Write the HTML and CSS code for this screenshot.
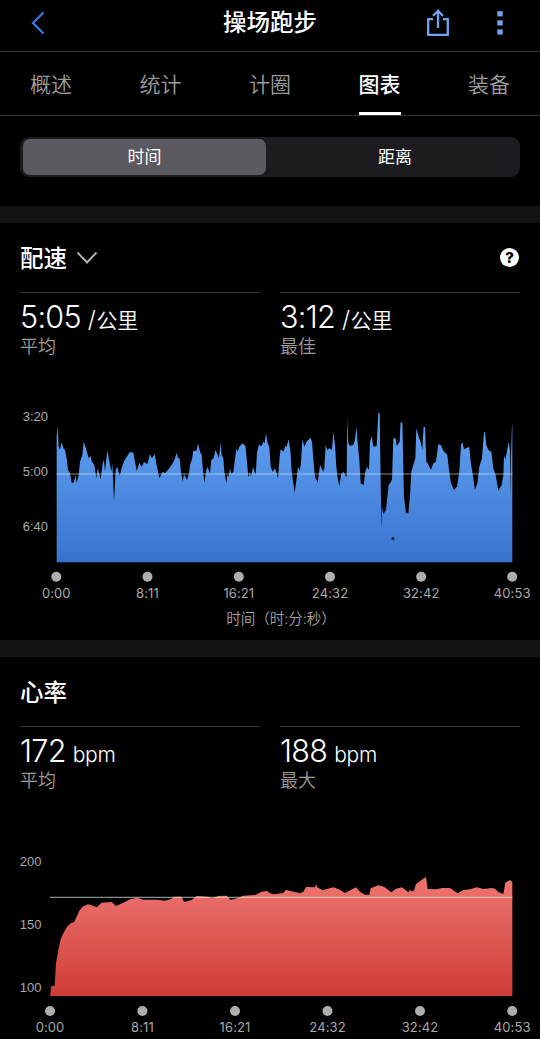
FILE: index.html
```
<!DOCTYPE html>
<html lang="zh-CN">

<head>
    <meta charset="UTF-8">
    <meta name="viewport" content="width=device-width, initial-scale=1">
    <title>操场跑步</title>
    <link rel="stylesheet" href="styles.css">
</head>

<body>
    <header class="topbar">
        <svg class="back" viewBox="0 0 14 24" fill="none" stroke="currentColor" stroke-width="2.2">
            <path d="M12.500 1.500 2 12l10.500 10.500"></path>
        </svg>
        <h1 class="title">操场跑步</h1>
        <div class="actions">
            <svg class="share" viewBox="0 0 24 28" fill="none" stroke="currentColor" stroke-width="2.300">
                <path d="M7 10.200H2.200v15.600h19.600V10.200H17M12 19V2M7 6.800l5-5 5 5"></path>
            </svg>
            <svg class="more" viewBox="0 0 6 24" fill="currentColor">
                <rect x="0.300" y="0.200" width="5.400" height="5.200"></rect>
                <rect x="0.300" y="9.300" width="5.400" height="5.200"></rect>
                <rect x="0.300" y="18.400" width="5.400" height="5.200"></rect>
            </svg>
        </div>
    </header>

    <nav class="tabs">
        <a class="tab">概述</a>
        <a class="tab">统计</a>
        <a class="tab">计圈</a>
        <a class="tab active">图表</a>
        <a class="tab">装备</a>
    </nav>

    <div class="switch-row">
        <div class="switch">
            <div class="option selected">时间</div>
            <div class="option">距离</div>
        </div>
    </div>

    <main>
        <section class="card">
            <div class="card-head">
                <h2>配速</h2>
                <svg class="chevron" viewBox="0 0 22 14" fill="none" stroke="currentColor" stroke-width="2">
                    <path d="M1.500 1.500 11 11.500l9.500-10"></path>
                </svg>
                <span class="help">?</span>
            </div>
            <div class="stats">
                <div class="stat">
                    <div class="value">5:05<span class="unit"><span class="slash">/</span>公里</span></div>
                    <div class="label">平均</div>
                </div>
                <div class="stat">
                    <div class="value">3:12<span class="unit"><span class="slash">/</span>公里</span></div>
                    <div class="label">最佳</div>
                </div>
            </div>
            <svg class="chart pace" width="540" height="204" viewBox="0 0 540 204">
                <defs>
                    <linearGradient id="blue" gradientUnits="userSpaceOnUse" x1="0" y1="36" x2="0" y2="487">
                        <stop offset="0" stop-color="#62a3f3"></stop>
                        <stop offset="0.400" stop-color="#5291e6"></stop>
                        <stop offset="1" stop-color="#3874cf"></stop>
                    </linearGradient>
                </defs>
                <path fill="url(#blue)" transform="scale(0.33333)" d="M170 487V110L173 78 176 140 180 150 185 126 190 145 195 150 200 175 204 210 210 220 215 248 221 248 227 225 230 248 236 225 240 185 247 165 251 125 258 145 266 175 271 168 276 185 283 195 289 235 293 205 302 238 308 190 312 180 315 215 322 150 330 195 334 215 337 190 342 305 347 210 352 200 359 228 366 200 374 180 380 170 390 156 400 158 405 185 410 213 418 188 425 200 432 186 442 192 450 163 456 175 464 163 470 195 478 235 488 215 495 220 508 205 518 190 524 178 530 158 534 175 539 175 543 215 548 245 552 222 561 240 567 220 570 195 576 178 580 152 590 152 594 130 600 155 605 165 608 200 613 248 618 215 622 200 630 220 634 180 641 175 646 150 651 160 657 175 662 127 665 165 670 175 673 215 679 250 682 225 686 230 690 205 694 222 700 215 706 170 709 145 713 155 718 140 728 130 736 138 740 175 745 232 750 215 753 230 759 200 767 225 771 160 776 135 785 138 790 125 794 130 798 100 803 130 808 140 812 200 818 215 825 205 830 220 834 235 839 170 842 148 850 155 856 138 860 140 866 118 871 150 875 215 880 250 884 278 890 235 894 200 899 212 903 190 907 118 913 140 920 125 931 113 936 125 941 190 945 230 953 248 960 195 970 215 973 205 977 135 982 150 988 145 996 150 1000 95 1005 135 1009 200 1013 235 1018 258 1023 225 1030 215 1040 232 1042 55 1045 130 1050 138 1060 135 1065 120 1069 80 1074 140 1078 180 1082 250 1091 255 1096 215 1101 200 1107 210 1110 125 1115 108 1120 140 1130 138 1135 38 1139 40 1141 180 1143 300 1144 385 1146 320 1150 342 1158 330 1166 255 1176 240 1180 115 1187 115 1190 138 1199 125 1202 65 1207 70 1210 200 1212 290 1218 340 1225 340 1230 290 1234 215 1246 175 1249 85 1256 110 1263 130 1267 150 1271 80 1275 82 1279 185 1283 190 1293 210 1300 190 1308 185 1315 133 1322 135 1330 152 1342 165 1347 210 1353 250 1362 270 1371 260 1378 215 1383 135 1387 125 1392 148 1408 140 1412 185 1420 235 1425 270 1432 250 1438 200 1446 175 1452 97 1455 97 1459 135 1465 150 1474 155 1480 205 1487 225 1495 272 1505 255 1510 225 1512 165 1516 180 1526 125 1530 150 1532 290 1533 170 1536 75H1537V487Z"></path>
                <path class="average" d="M56.500 74H512.500"></path>
                <circle cx="393" cy="138.500" r="1.500" fill="#0b1a33"></circle>
                <g class="y-labels">
                    <text x="48" y="21">3:20</text>
                    <text x="48" y="76">5:00</text>
                    <text x="48" y="131">6:40</text>
                </g>
                <g class="dots">
                    <circle cx="56.300" cy="176.700" r="5"></circle>
                    <circle cx="147.500" cy="176.700" r="5"></circle>
                    <circle cx="238.800" cy="176.700" r="5"></circle>
                    <circle cx="330" cy="176.700" r="5"></circle>
                    <circle cx="421.200" cy="176.700" r="5"></circle>
                    <circle cx="512.200" cy="176.700" r="5"></circle>
                </g>
                <g class="x-labels">
                    <text x="56.300" y="198">0:00</text>
                    <text x="147.500" y="198">8:11</text>
                    <text x="238.800" y="198">16:21</text>
                    <text x="330" y="198">24:32</text>
                    <text x="421.200" y="198">32:42</text>
                    <text x="512.200" y="198">40:53</text>
                </g>
            </svg>
            <div class="axis-title">时间（时:分:秒）</div>
        </section>

        <section class="card">
            <div class="card-head">
                <h2>心率</h2>
            </div>
            <div class="stats">
                <div class="stat">
                    <div class="value">172<span class="unit">bpm</span></div>
                    <div class="label">平均</div>
                </div>
                <div class="stat">
                    <div class="value">188<span class="unit">bpm</span></div>
                    <div class="label">最大</div>
                </div>
            </div>
            <svg class="chart heart" width="540" height="189" viewBox="0 0 540 189">
                <defs>
                    <linearGradient id="red" gradientUnits="userSpaceOnUse" x1="0" y1="81" x2="0" y2="438">
                        <stop offset="0" stop-color="#ee736e"></stop>
                        <stop offset="0.250" stop-color="#e76863"></stop>
                        <stop offset="1" stop-color="#ce3d35"></stop>
                    </linearGradient>
                </defs>
                <path fill="url(#red)" transform="scale(0.33333)" d="M150 438 154 408 164 408 168 340 175 300 182 268 190 250 200 232 212 220 222 216 230 200 238 182 248 170 264 163 275 166 290 172 305 158 335 156 348 168 370 158 390 148 412 143 430 149 470 149 495 152 515 146 522 140 545 140 552 156 575 150 590 138 625 140 635 145 655 138 680 137 692 150 715 143 730 137 765 135 785 125 800 123 810 130 822 133 850 129 858 119 880 125 900 130 910 125 918 111 945 112 949 103 951 111 968 121 1000 112 1015 117 1035 129 1068 112 1080 125 1095 134 1108 134 1112 115 1135 106 1152 110 1174 127 1188 116 1206 112 1225 127 1230 119 1235 124 1242 122 1248 102 1265 90 1278 81 1283 117 1310 118 1325 114 1350 114 1373 130 1390 120 1410 118 1430 112 1450 117 1475 114 1485 116 1495 126 1510 132 1516 98 1530 90 1537 96V438Z"></path>
                <path class="average" d="M50 47.400H512.500"></path>
                <g class="y-labels">
                    <text x="41.500" y="16">200</text>
                    <text x="41.500" y="79">150</text>
                    <text x="41.500" y="142">100</text>
                </g>
                <g class="dots">
                    <circle cx="50" cy="161" r="5"></circle>
                    <circle cx="142.400" cy="161" r="5"></circle>
                    <circle cx="235" cy="161" r="5"></circle>
                    <circle cx="327.500" cy="161" r="5"></circle>
                    <circle cx="420" cy="161" r="5"></circle>
                    <circle cx="512.200" cy="161" r="5"></circle>
                </g>
                <g class="x-labels">
                    <text x="50" y="182">0:00</text>
                    <text x="142.400" y="182">8:11</text>
                    <text x="235" y="182">16:21</text>
                    <text x="327.500" y="182">24:32</text>
                    <text x="420" y="182">32:42</text>
                    <text x="512.200" y="182">40:53</text>
                </g>
            </svg>
        </section>
    </main>
</body>

</html>
```
FILE: styles.css
```
* {
    box-sizing: border-box;
}

body {
    margin: 0;
    width: 540px;
    height: 1039px;
    overflow: hidden;
    background-color: #000;
    color: #fff;
    font-family: Inter, 'Noto Sans CJK SC', sans-serif;
}

svg {
    display: block;
}

h1,
h2 {
    margin: 0;
    font-weight: 500;
}

.topbar {
    display: grid;
    grid-template-columns: 1fr auto 1fr;
    align-items: center;
    height: 52px;
    padding: 0 37px 6px 31px;
    border-bottom: 1px solid #363638;
}

.back {
    width: 14px;
    height: 24px;
    color: #3b7ce6;
}

.title {
    margin-left: 6px;
    padding-top: 1px;
    font-size: 23.5px;
    line-height: 44px;
}

.actions {
    display: flex;
    justify-content: flex-end;
    align-items: center;
    gap: 47px;
    color: #6ea5ee;
}

.share {
    width: 24px;
    height: 28px;
}

.more {
    width: 6px;
    height: 24px;
}

.tabs {
    display: flex;
    justify-content: space-between;
    height: 64px;
    padding: 0 30px;
    border-bottom: 1px solid #363638;
}

.tab {
    width: 42px;
    line-height: 65px;
    font-size: 21px;
    font-weight: 350;
    white-space: nowrap;
    color: #9c9c9c;
}

.tab.active {
    color: #fff;
    font-weight: 500;
    height: 63px;
    border-bottom: 3px solid #fff;
}

.switch-row {
    height: 90px;
    padding: 21px 20px 0;
}

.switch {
    display: flex;
    height: 40px;
    padding: 2px 3px;
    border-radius: 9px;
    background-color: #1c1b20;
}

.option {
    flex: 1;
    border-radius: 7px;
    font-size: 17px;
    line-height: 36px;
    text-align: center;
}

.option:last-child {
    padding-left: 7px;
}

.option.selected {
    flex: 0 0 243px;
    background-color: #5b5a60;
}

.card {
    height: 434px;
    border-top: 17px solid #121212;
}

.card-head {
    display: flex;
    align-items: center;
    height: 69px;
    padding: 0 21px 0 20px;
}

.card-head h2 {
    font-size: 23.5px;
    line-height: 68px;
    padding-top: 2px;
}

.chevron {
    width: 22px;
    height: 14px;
    margin-left: 9px;
    color: #b0b0b0;
}

.help {
    width: 19px;
    height: 19px;
    margin-left: auto;
    border-radius: 50%;
    background-color: #fff;
    color: #000;
    font-size: 15px;
    font-weight: 800;
    line-height: 19px;
    text-align: center;
}

.stats {
    display: grid;
    grid-template-columns: 1fr 1fr;
    gap: 20px;
    padding: 0 20px;
}

.stat {
    height: 80px;
    padding-top: 6px;
    border-top: 1px solid #363638;
}

.value {
    height: 37px;
    font-size: 30.5px;
    font-weight: 350;
    line-height: 36px;
    letter-spacing: -0.7px;
    white-space: nowrap;
}

.unit {
    margin-left: 7px;
    font-size: 21px;
    letter-spacing: -0.3px;
}

.slash {
    margin-right: 1px;
    font-size: 23px;
}

.label {
    font-size: 18px;
    font-weight: 350;
    line-height: 22px;
    color: #9c9c9c;
}

.pace {
    margin-top: 28px;
}

.heart {
    margin-top: 44px;
}

.average {
    fill: none;
    stroke: #d8ece8;
    stroke-opacity: 0.6;
    stroke-width: 1.2;
}

.y-labels,
.x-labels {
    fill: #a8a8a8;
    font-size: 13px;
}

.y-labels {
    font-family: 'Liberation Sans', sans-serif;
    text-anchor: end;
}

.x-labels {
    text-anchor: middle;
    letter-spacing: 0.1px;
}

.dots {
    fill: #aeaeae;
}

.axis-title {
    margin-top: 4px;
    padding-left: 22px;
    font-size: 14.5px;
    font-weight: 350;
    line-height: 22px;
    text-align: center;
    color: #a2a2a2;
}
```
